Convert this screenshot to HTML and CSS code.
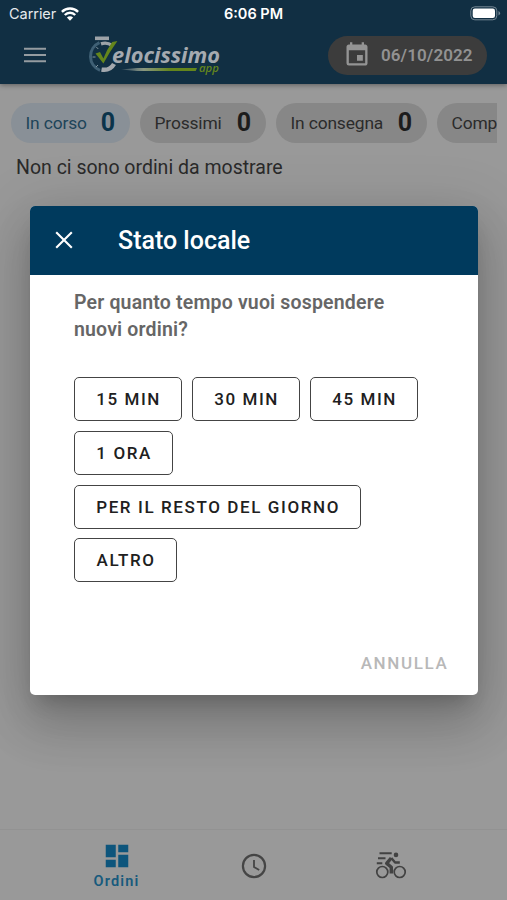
FILE: index.html
```html
<!DOCTYPE html>
<html lang="it">
<head>
<meta charset="utf-8">
<title>Velocissimo</title>
<link rel="stylesheet" href="styles.css">
</head>
<body>
<div class="app">
  <header class="header">
    <div class="status">
      <div class="carrier"><span>Carrier</span>
        <svg width="18" height="14" viewBox="0 0 18 14" fill="none" stroke="#fff" stroke-width="2.4"><path d="M.9 4.8a11.5 11.5 0 0 1 16.2 0M3.8 8a7.3 7.3 0 0 1 10.4 0"/><path d="M9 13.7 5.9 10.5a4.4 4.4 0 0 1 6.2 0Z" fill="#fff" stroke="none"/></svg>
      </div>
      <div class="time">6:06 PM</div>
      <div class="battery"><svg width="31" height="15" viewBox="0 0 31 15"><rect x=".8" y=".8" width="26" height="13" rx="4" fill="none" stroke="#768895"/><rect x="2.7" y="2.6" width="22.3" height="9.4" rx="2.2" fill="#fff"/><path d="M28.5 5v4.6q1.6-.8 1.6-2.3T28.5 5" fill="#768895"/></svg></div>
    </div>
    <div class="toolbar">
      <svg class="menu" width="22" height="16" viewBox="0 0 22 16" stroke="#959ca1" stroke-width="2"><path d="M0 1.8h22M0 8h22M0 14.2h22"/></svg>
      <svg class="logo" width="136" height="40" viewBox="0 0 136 40">
        <defs><linearGradient id="trail"><stop offset="0" stop-color="#9aa5a9" stop-opacity=".2"/><stop offset=".3" stop-color="#8a9780"/><stop offset=".65" stop-color="#64851c"/><stop offset="1" stop-color="#64851c"/></linearGradient></defs>
        <path d="M8 1.5h14v3.6H8z" fill="#9da3a8"/>
        <path d="M12.5 7.6A15 15 0 0 0 13 35.3" fill="none" stroke="#3f6075" stroke-width="3"/>
        <path d="M5.5 22h3M9.3 12l2 2M9 32l2-2" stroke="#8395a0" stroke-width="1"/>
        <path d="M14 8.8q6-2 11 1.6" fill="none" stroke="#9da3a8" stroke-width="3.4"/>
        <path d="M14.5 34.6q8.5 1.4 12.5-5.6" fill="none" stroke="#a3a8ae" stroke-width="4.5"/>
        <path d="m8.5 18.5 4.5-1.4 3.4 6.4Q20 14 25.2 6.9l5.2-.9Q22.5 17 16.4 28.4Z" fill="#64851c"/>
        <text x="25" y="28" textLength="108" lengthAdjust="spacingAndGlyphs" class="brand">elocissimo</text>
        <path d="M34 34.4 50 32.9h60l-1.3 3.2H50Z" fill="url(#trail)"/>
        <text x="112" y="36.5" textLength="20" lengthAdjust="spacingAndGlyphs" class="brand-sub">app</text>
      </svg>
      <div class="date"><svg width="28" height="28" viewBox="0 0 24 24" fill="#949494"><path d="M17 12h-5v5h5v-5zM16 1v2H8V1H6v2H5c-1.11 0-2 .9-2 2v14a2 2 0 0 0 2 2h14c1.1 0 2-.9 2-2V5c0-1.1-.9-2-2-2h-1V1h-2zm3 18H5V8h14v11z"/></svg><span>06/10/2022</span></div>
    </div>
  </header>
  <main class="main">
    <div class="chips">
      <div class="chip active">In corso<b>0</b></div>
      <div class="chip">Prossimi<b>0</b></div>
      <div class="chip consegna">In consegna<b>0</b></div>
      <div class="chip">Comp</div>
    </div>
    <p class="empty">Non ci sono ordini da mostrare</p>
  </main>
  <nav class="nav">
    <div class="tab selected"><svg width="30" height="30" viewBox="0 0 24 24" fill="#0d557c"><path d="M3 13h8V3H3v10zm0 8h8v-6H3v6zm10 0h8V11h-8v10zm0-18v6h8V3h-8z"/></svg><span>Ordini</span></div>
    <div class="tab"><svg width="26" height="26" viewBox="0 0 26 26" fill="none" stroke="#454545" stroke-width="2.2"><circle cx="13" cy="13" r="11.1"/><path d="M13 7v7l5.2 3.1" stroke-width="1.8"/></svg></div>
    <div class="tab bike"><svg width="32" height="30" viewBox="0 0 32 30" fill="none" stroke="#424242"><g stroke-width="1.7"><circle cx="7.3" cy="22" r="5.5"/><circle cx="24.7" cy="22" r="5.5"/></g><path d="M4.5 3.2h12.2M3 8.2h7.5M1.8 13.2h5.5" stroke-width="1.9"/><circle cx="21" cy="4.9" r="2.3" fill="#424242" stroke="none"/><path d="m16.2 8-4.5 5.4 4.6 3.8v6.3" stroke-width="3.4" stroke-linejoin="round"/><path d="m16.3 8 3.8 4.5h4.7" stroke-width="2.4" stroke-linejoin="round"/></svg></div>
  </nav>
</div>
<section class="dialog">
  <div class="dialog-head"><svg width="18" height="18" viewBox="0 0 18 18" stroke="#fff" stroke-width="2.1"><path d="m1.2 1.2 15.6 15.6M16.8 1.2 1.2 16.8"/></svg><h1>Stato locale</h1></div>
  <div class="dialog-body">
    <p>Per quanto tempo vuoi sospendere nuovi ordini?</p>
    <div class="options">
      <button class="min">15 MIN</button><button class="min">30 MIN</button><button class="min">45 MIN</button><button class="hour">1 ORA</button><button class="rest">PER IL RESTO DEL GIORNO</button><button class="other">ALTRO</button>
    </div>
  </div>
  <div class="dialog-foot">ANNULLA</div>
</section>
</body>
</html>
```
FILE: styles.css
```css
* { box-sizing: border-box; }
body { margin: 0; width: 507px; height: 900px; overflow: hidden; position: relative; background: #999; font-family: Roboto, sans-serif; }
svg { display: block; flex: none; }
.app { display: flex; flex-direction: column; height: 900px; }
.header { height: 84px; background: #112f43; box-shadow: 0 1px 5px #0006; flex: none; }
.status { height: 27px; display: grid; grid-template-columns: 1fr auto 1fr; align-items: center; padding: 0 6px 0 9px; font-family: Inter, sans-serif; font-size: 14.5px; color: #e6eaed; }
.carrier { display: flex; gap: 5px; align-items: center; letter-spacing: -.05px; }
.time { font-weight: 600; color: #fff; margin: 0 3px 0 0; }
.battery { display: flex; justify-content: flex-end; }
.toolbar { display: flex; align-items: center; height: 56px; padding: 0 20px 0 24px; }
.logo { margin-left: 41px; }
.brand { font: italic 700 21.5px "Open Sans", sans-serif; fill: #a5aab0; }
.brand-sub { font: italic 600 11px "Open Sans", sans-serif; fill: #64851c; }
.date { margin-left: auto; width: 159px; height: 39px; border-radius: 20px; background: #3c3c3c; display: flex; align-items: center; padding-left: 15px; gap: 10px; color: #929292; font-weight: 600; font-size: 17px; letter-spacing: .1px; }
.date span { margin-top: -1px; }
.main { flex: 1; padding: 19px 10px 0 11px; }
.chips { display: flex; gap: 10px; overflow: hidden; }
.chip { flex: none; height: 40px; border-radius: 20px; background: #878787; display: flex; align-items: center; padding: 0 15px 0 14.5px; color: #2b2b2b; font-size: 17.4px; letter-spacing: -.15px; line-height: 20px; width: 126px; justify-content: space-between; white-space: nowrap; }
.chip b { font-size: 25px; letter-spacing: 0; font-weight: 700; color: #1c1c1c; }
.chip.active { width: 119px; background: #899097; color: #1d4459; }
.chip.active b { color: #0b344b; }
.chip.consegna { width: 151px; }
.empty { margin: 13px 5px 0; font-size: 19.5px; line-height: 24px; color: #2a2a2a; letter-spacing: 0; }
.nav { height: 71px; border-top: 1px solid #929292; display: flex; padding: 0 48px; }
.tab { flex: 1; display: flex; flex-direction: column; align-items: center; padding-top: 23px; }
.tab.bike { padding-top: 20px; }
.tab.selected { padding-top: 11px; color: #175a7d; font-weight: 600; font-size: 14.5px; letter-spacing: 1.2px; line-height: 22px; }
.dialog { position: absolute; left: 30px; top: 206px; width: 448px; height: 489px; background: #fff; border-radius: 5px; overflow: hidden; box-shadow: 0 14px 19px -9px #0003, 0 30px 48px 4px #00000024, 0 11px 58px 10px #0000001f; display: flex; flex-direction: column; }
.dialog-head { height: 68.5px; background: #003a5d; display: flex; align-items: center; padding-left: 25px; gap: 45px; color: #fff; }
h1 { margin: 0; font-size: 25px; font-weight: 500; letter-spacing: 0; }
.dialog-body { padding: 14.5px 44px 0; flex: 1; }
.dialog-body p { margin: 0; font-size: 19.5px; line-height: 27px; font-weight: 600; color: #666; width: 340px; letter-spacing: .17px; }
.options { display: flex; flex-wrap: wrap; gap: 9.8px 10px; margin-top: 34px; }
button { height: 44px; padding: 0 0 0 1.2px; background: none; border: 1.5px solid #444; border-radius: 5px; font: 500 17px Roboto, sans-serif; letter-spacing: 1.6px; color: #202020; white-space: nowrap; }
.min { width: 108px; }
.hour { width: 99px; margin-right: 150px; }
.rest { width: 287px; }
.other { width: 103px; }
.dialog-foot { padding: 0 29.5px 21px; text-align: right; font-size: 17px; line-height: 22px; font-weight: 500; letter-spacing: 1.65px; color: #b8b8b8; }
```
